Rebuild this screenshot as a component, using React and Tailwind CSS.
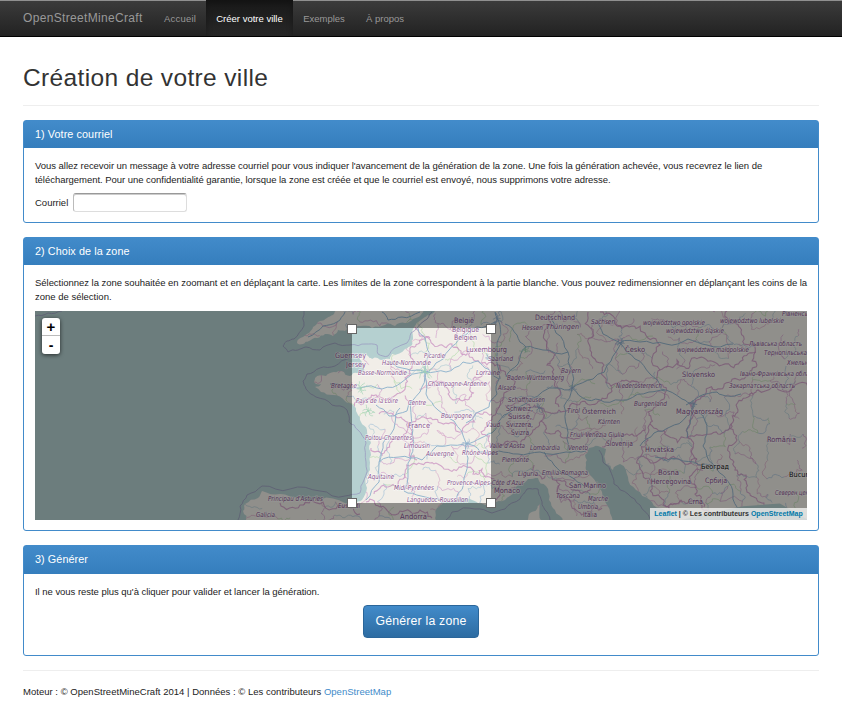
import React from "react";

// Deterministic generator so that the map is identical on every load.
function makeRandom(seed) {
  let s = seed;
  return () => {
    s = (s * 16807) % 2147483647;
    return s / 2147483647;
  };
}

// Midpoint displacement: turns a coarse polyline into a meandering one.
function meander(points, rand, amount = 0.28, depth = 2) {
  let pts = points;
  for (let d = 0; d < depth; d++) {
    const next = [pts[0]];
    for (let i = 1; i < pts.length; i++) {
      const [ax, ay] = pts[i - 1];
      const [bx, by] = pts[i];
      const k = (rand() - 0.5) * 2 * amount;
      next.push([(ax + bx) / 2 - (by - ay) * k, (ay + by) / 2 + (bx - ax) * k]);
      next.push([bx, by]);
    }
    pts = next;
  }
  return pts;
}

const toPath = (pts) => "M" + pts.map(([x, y]) => x.toFixed(1) + " " + y.toFixed(1)).join("L");

const parse = (text) => text.split(" ").map((p) => p.split(",").map(Number));

const ENGLAND = parse(
  "297,343 303,337 309,333 313,327 320,321 327,318 333,315 337,309 424,309 421,315 413,319 405,323 395,326 385,325 372,328 360,326 352,327 345,331 338,330 333,336 325,334 317,338 309,341 303,344"
);
const EUROPE = parse(
  "440,309 430,315 425,317 415,326 413,337 412,345 405,349 392,354 390,359 383,360 372,359 368,356 362,354 359,356 362,363 364,372 357,373 350,376 342,371 334,372 326,376 315,378 314,382 321,384 315,387 321,392 333,395 345,401 353,405 357,413 361,422 367,430 371,443 371,455 370,470 367,488 362,500 355,505 345,503 320,500 300,497 280,494 262,491 258,498 245,504 243,511 247,522 437,522 437,508 443,503 455,500 470,499 478,503 492,503 505,500 515,491 520,484 528,479 538,478 546,486 549,500 555,510 563,522 613,522 607,505 602,492 597,485 590,475 586,465 585,455 589,448 598,446 606,449 606,464 613,470 620,464 628,477 636,490 650,500 660,508 668,513 674,522 812,522 812,309"
);
const CORSICA = parse("527,522 529,514 537,509 540,504 542,522");

const LANDS = (() => {
  const rand = makeRandom(71);
  return [ENGLAND, EUROPE, CORSICA].map((p) => toPath(meander([...p, p[0]], rand, 0.18, 2)) + "Z");
})();

const MARITIME = [
  "35,316 48,313 62,311",
  "304,311 304,326 294,339 287,341 283,346 288,352 298,350 306,347 320,350 335,343 350,345 366,344 377,345 378,354 388,356 395,348 407,343 411,333 424,321 432,312",
  "350,358 335,366 320,368 307,374 303,381 306,389 316,397 332,405 347,410 349,422 358,430 366,443 366,462 364,480 360,493 345,496 320,491 290,489 262,486 247,495 240,506 238,520",
  "446,520 452,512 475,509 492,513 505,509 520,499 527,489 538,489 541,499 545,510 550,520",
  "599,450 603,462 610,470 614,484 628,494 640,505 650,519",
].map(parse);

const BORDERS = [
  "352,410 366,402 380,397 391,399 402,392 405,378 412,366 410,352 418,344 430,338",
  "415,327 424,337 440,345 452,344 461,353 470,352 482,363 500,366 512,377 506,392 500,405 492,420",
  "371,448 382,456 390,443 399,440 410,424 424,417 441,423 456,431 466,425 476,413 492,414",
  "366,502 380,507 400,511 420,510 432,518",
  "374,494 388,487 403,479 412,464 430,463 444,469 459,467 473,474 482,469 494,479 496,500",
  "379,414 391,413 404,420 411,434 407,447 417,460",
  "427,386 445,385 450,397 464,400 474,393 475,377 486,370",
  "492,420 481,432 491,445 504,444 519,446 531,434 541,421 538,407 526,403 505,406",
  "538,407 559,410 575,404 590,405 607,398 611,386 626,380 641,386 655,383 660,370 677,360 690,366 704,358 722,365 743,360 756,352",
  "546,315 553,325 545,340 555,355 547,365 553,378 560,390 559,407",
  "600,312 615,321 632,326 645,333 660,345 660,370",
  "588,312 593,333 590,350 604,365 611,386",
  "660,384 664,399 648,412 650,424 668,436 688,438 690,424 689,403 701,397 716,390 731,382 748,376 757,365",
  "688,438 700,435 718,434 731,424 738,410 748,397 758,390 785,392 808,387",
  "645,425 632,434 612,436 602,447",
  "650,424 648,440 641,456 658,461 679,459 697,459 693,448 688,438",
  "641,456 641,470 652,486 662,499 669,508 681,500 694,501 709,512 720,520",
  "697,459 702,470 691,482 695,494 704,507",
  "731,424 737,440 730,455 735,470 746,475 747,492 757,500 767,510 765,520",
  "757,365 752,344 741,332 730,323 727,311",
  "541,421 545,432 560,432 570,438 585,434 602,438",
  "534,465 542,479 558,480 571,489 584,492 595,487",
  "556,480 560,499 575,509 590,512 602,508",
  "280,503 300,505 323,502 344,506 360,514",
].map(parse);

const ROADS = [
  "425,372 436,363 449,350 461,336 477,327 495,322",
  "425,372 430,354 425,338 418,328",
  "425,372 407,369 389,361",
  "425,372 402,382 382,389 360,388 330,384",
  "425,372 420,392 407,411 389,416 376,405",
  "425,372 426,394 438,410 454,421 466,443 468,458 464,478 456,499",
  "425,372 446,372 463,362 478,361 488,369 499,379",
  "400,408 395,423 383,443 379,462 379,482 366,500",
  "411,400 412,425 413,447 408,463 404,491",
  "379,462 399,457 422,460 437,446 464,444",
  "404,491 421,496 440,500",
  "466,443 481,438 495,430 504,415 515,407 530,399 557,388 572,388",
  "466,443 480,452 499,451 518,454 540,452 566,452 586,451",
  "499,379 497,394 489,407 466,423",
  "572,388 593,379 611,361 620,345 622,338",
  "572,388 571,370 568,352 556,333 549,315",
  "568,352 543,350 526,347 517,335 505,324",
  "526,347 518,364 506,377",
  "572,388 587,400 604,402 627,400 649,392 665,391",
  "572,388 564,406 567,427 568,450",
  "619,342 603,334 598,320",
  "620,343 635,359 650,374 661,389 682,399 694,404",
  "686,405 700,396 717,392 728,396 741,394",
  "694,404 686,417 670,427 654,433 640,446",
  "694,406 690,424 687,438",
  "700,413 707,430 703,446 713,464 727,480 733,494 740,512",
  "655,457 678,459 699,465 712,465",
  "620,343 640,342 666,344 688,339 707,345 733,344",
  "544,452 554,465 571,477 584,486",
  "500,379 497,343 500,325 495,312",
  "382,312 388,320 402,317 420,312",
  "345,312 337,322 323,326 308,337",
].map(parse);

const HUBS = [
  [425, 372, 6],
  [572, 388, 4],
  [467, 444, 4],
  [620, 343, 4],
  [694, 404, 3],
  [489, 358, 4],
  [497, 319, 6],
  [539, 408, 4],
  [361, 388, 5],
  [368, 411, 5],
  [525, 350, 4],
];

const PALETTE = ["#d3a3cc", "#d3a3cc", "#d9abc8", "#a6c2d8", "#aecbd4", "#b7dcb0"];

const NETWORK = (() => {
  const rand = makeRandom(4242);
  const step = 15;
  const cols = 38;
  const rows = 15;
  const nodes = [];
  for (let r = 0; r < rows; r++) {
    nodes.push([]);
    for (let c = 0; c < cols; c++) {
      nodes[r].push([245 + c * step + (rand() - 0.5) * 11, 309 + r * step + (rand() - 0.5) * 11]);
    }
  }
  const out = [];
  const link = (a, b) => {
    const color = PALETTE[Math.floor(rand() * PALETTE.length)];
    out.push({ d: toPath(meander([a, b], rand, 0.3, 3)), color });
  };
  for (let r = 0; r < rows; r++) {
    for (let c = 0; c < cols; c++) {
      if (c + 1 < cols && rand() < 0.5) link(nodes[r][c], nodes[r][c + 1]);
      if (r + 1 < rows && rand() < 0.5) link(nodes[r][c], nodes[r + 1][c]);
    }
  }
  return out;
})();

const LINES = (() => {
  const rand = makeRandom(99);
  return {
    borders: BORDERS.map((p) => toPath(meander(p, rand, 0.32, 3))),
    roads: ROADS.map((p) => toPath(meander(p, rand, 0.13, 2))),
    maritime: MARITIME.map((p) => toPath(meander(p, rand, 0.12, 2))),
    hubs: HUBS.map(([x, y, r]) =>
      Array.from({ length: 9 }, (_, i) => {
        const a = (i / 9) * Math.PI * 2 + rand();
        const l = r * (0.6 + rand() * 0.9);
        return toPath(meander([[x, y], [x + Math.cos(a) * l, y + Math.sin(a) * l]], rand, 0.3, 2));
      }).join("")
    ),
  };
})();

// text, left, baseline, width, upright
const LABELS = [
  ["Guernsey", 335, 358, 31, 1],
  ["Jersey", 346, 367, 20, 1],
  ["Haute-Normandie", 382, 365, 49],
  ["Basse-Normandie", 358, 375, 49],
  ["Bretagne", 331, 388, 26],
  ["Pays de la Loire", 356, 403, 42],
  ["Centre", 408, 405, 18],
  ["France", 408, 428, 22, 1],
  ["Poitou-Charentes", 365, 440, 47],
  ["Limousin", 404, 448, 26],
  ["Aquitaine", 368, 479, 26],
  ["Midi-Pyrénées", 394, 490, 40],
  ["Languedoc-Roussillon", 407, 502, 61],
  ["Principau d'Asturies", 268, 501, 55],
  ["Euskadi", 338, 508, 22],
  ["Galicia", 256, 517, 19],
  ["Andorra", 400, 519, 27, 1],
  ["België", 454, 323, 20, 1],
  ["Belgique", 452, 332, 27, 1],
  ["Belgien", 454, 340, 23, 1],
  ["Deutschland", 535, 320, 40, 1],
  ["Hessen", 522, 330, 21],
  ["Thüringen", 546, 329, 33],
  ["Sachsen", 591, 324, 24],
  ["Luxembourg", 466, 352, 41, 1],
  ["Picardie", 424, 358, 21],
  ["Saarland", 488, 361, 25],
  ["Lorraine", 476, 375, 24],
  ["Bayern", 561, 373, 20],
  ["Baden-Württemberg", 507, 380, 57],
  ["Champagne-Ardenne", 428, 386, 59],
  ["Alsace", 498, 390, 18],
  ["Schaffhausen", 508, 402, 37],
  ["Schweiz,", 506, 411, 27, 1],
  ["Suisse,", 508, 419, 24, 1],
  ["Svizzera,", 506, 427, 27, 1],
  ["Svizra", 511, 435, 18, 1],
  ["Bourgogne", 441, 418, 31],
  ["Vaud", 486, 427, 14],
  ["Tirol", 567, 413, 13],
  ["Österreich", 582, 414, 34, 1],
  ["Kärnten", 598, 424, 22],
  ["Friuli Venezia Giulia", 570, 437, 54],
  ["Slovenija", 606, 446, 27, 1],
  ["Valle d'Aosta", 489, 448, 36],
  ["Lombardia", 530, 450, 30],
  ["Veneto", 568, 450, 20],
  ["Auvergne", 426, 456, 28],
  ["Rhône-Alpes", 462, 455, 36],
  ["Piemonte", 502, 462, 27],
  ["Liguria", 518, 476, 20],
  ["Emilia-Romagna", 542, 475, 46],
  ["Provence-Alpes-Côte d'Azur", 447, 485, 77],
  ["Monaco", 494, 493, 26, 1],
  ["San Marino", 569, 488, 37, 1],
  ["Toscana", 556, 498, 24],
  ["Marche", 588, 501, 20],
  ["Umbria", 578, 509, 20],
  ["Italia", 583, 517, 14, 1],
  ["województwo opolskie", 643, 325, 62],
  ["województwo lubelskie", 720, 323, 64],
  ["województwo śląskie", 666, 333, 58],
  ["województwo małopolskie", 677, 352, 72],
  ["Česko", 625, 352, 20, 1],
  ["Рівненська", 782, 316, 33],
  ["Львівська область", 749, 346, 53],
  ["Тернопільська", 764, 355, 43],
  ["Хмельницька", 787, 365, 38],
  ["Slovensko", 682, 377, 33, 1],
  ["Івано-Франківська область", 740, 376, 79],
  ["Закарпатська область", 729, 388, 66],
  ["Niederösterreich", 616, 388, 46],
  ["Burgenland", 634, 406, 33],
  ["Magyarország", 676, 414, 47, 1],
  ["România", 767, 442, 29, 1],
  ["Hrvatska", 645, 452, 29, 1],
  ["Bosna", 658, 475, 21, 1],
  ["i Hercegovina", 647, 484, 44, 1],
  ["Србија", 705, 483, 22, 1],
  ["Crna", 688, 504, 15, 1],
  ["Северен центр", 775, 495, 40],
];

const CORNERS = [
  [347, 324],
  [486, 324],
  [347, 498],
  [486, 498],
];

function EuropeMap() {
  return (
    <svg className="block h-[209px] w-[772px]" viewBox="35 311 772 209">
      <defs>
        <clipPath id="land">
          {LANDS.map((d, i) => (
            <path key={i} d={d} />
          ))}
        </clipPath>
      </defs>
      <rect x="35" y="311" width="772" height="209" fill="#b5d0d0" />
      {LANDS.map((d, i) => (
        <path key={i} d={d} fill="#f1eee8" />
      ))}
      <g clipPath="url(#land)" fill="none">
        {NETWORK.map((l, i) => (
          <path key={i} d={l.d} stroke={l.color} strokeWidth="0.9" opacity="0.75" />
        ))}
        {LINES.borders.map((d, i) => (
          <path key={i} d={d} stroke="#c88fc0" strokeWidth="1.1" opacity="0.75" />
        ))}
        {LINES.roads.map((d, i) => (
          <path key={i} d={d} stroke="#94b6ce" strokeWidth="1" />
        ))}
        {LINES.hubs.map((d, i) => (
          <path key={i} d={d} stroke={i === 0 || i > 7 ? "#9fd4b4" : "#94b0cc"} strokeWidth="0.6" />
        ))}
      </g>
      {LINES.maritime.map((d, i) => (
        <path key={i} d={d} fill="none" stroke="#9a9cc0" strokeWidth="0.8" />
      ))}
      <g
        fontFamily="'DejaVu Sans', sans-serif"
        fill="#8a5590"
        stroke="#ffffff"
        strokeOpacity="0.6"
        strokeWidth="1.6"
        strokeLinejoin="round"
        paintOrder="stroke"
      >
        {LABELS.map(([text, x, y, w, upright]) => (
          <text
            key={text}
            x={x}
            y={y}
            textLength={w}
            lengthAdjust="spacingAndGlyphs"
            fontSize={upright ? 7.4 : 6.9}
            fontStyle={upright ? "normal" : "italic"}
          >
            {text}
          </text>
        ))}
        <g fill="#111111" fontSize="7.2">
          <text x="701" y="469" textLength="28" lengthAdjust="spacingAndGlyphs">Београд</text>
          <text x="789" y="477" textLength="31" lengthAdjust="spacingAndGlyphs">București</text>
        </g>
      </g>
      <path d="M35 311H807V520H35ZM352 328V503H491V328Z" fillRule="evenodd" fill="#000000" opacity="0.4" />
      {CORNERS.map(([x, y]) => (
        <rect key={x + "-" + y} x={x + 0.5} y={y + 0.5} width="9" height="9" fill="#ffffff" stroke="#666666" />
      ))}
    </svg>
  );
}

function Panel({ title, className, headClassName = "h-[27px]", children }) {
  return (
    <section className={`rounded-[3px] border border-[#428bca] bg-white ${className}`}>
      <h3 className={`flex items-center bg-linear-to-b from-[#428bca] to-[#357ebd] pb-[2px] pl-[11px] text-[10.8px] tracking-[0.08px] text-white ${headClassName}`}>
        {title}
      </h3>
      {children}
    </section>
  );
}

function NavLink({ active, className, children }) {
  return (
    <a
      className={`flex h-[36px] items-center justify-center pt-px text-[9.5px] ${
        active ? "bg-linear-to-b from-[#191919] to-[#272727] text-white shadow-[inset_0_3px_6px_rgba(0,0,0,0.3)]" : "text-[#999999]"
      } ${className}`}
    >
      {children}
    </a>
  );
}

export default function App() {
  return (
    <div className="h-[703px] w-[842px] overflow-hidden bg-white font-['Liberation_Sans',Arial,sans-serif] text-[9.5px] leading-[14px] text-[#222222]">
      <nav className="flex h-[37px] whitespace-nowrap border-b border-black bg-linear-to-b from-[#3c3c3c] to-[#222222] pl-[23px] shadow-[inset_0_1px_0_#909090]">
        <a className="flex h-[36px] w-[131px] items-center text-[12px] tracking-[0.33px] text-[#999999]">OpenStreetMineCraft</a>
        <NavLink className="w-[52px] tracking-[0.2px]">Accueil</NavLink>
        <NavLink active className="w-[87px]">Créer votre ville</NavLink>
        <NavLink className="w-[62px]">Exemples</NavLink>
        <NavLink className="w-[60px]">À propos</NavLink>
      </nav>
      <main className="mx-[23px] w-[796px] whitespace-nowrap">
        <h1 className="h-[69px] border-b border-[#eeeeee] pt-[26px] text-[24.5px] leading-[30px] tracking-[0.36px] text-[#333333]">
          Création de votre ville
        </h1>
        <Panel title="1) Votre courriel" className="mt-[14px] h-[103px]">
          <div className="px-[11px] pt-[11px]">
            <p className="tracking-[-0.038px]">Vous allez recevoir un message à votre adresse courriel pour vous indiquer l'avancement de la génération de la zone. Une fois la génération achevée, vous recevrez le lien de</p>
            <p className="tracking-[-0.035px]">téléchargement. Pour une confidentialité garantie, lorsque la zone est créée et que le courriel est envoyé, nous supprimons votre adresse.</p>
            <label className="mt-[6px] flex items-center">
              <span className="w-[38px]">Courriel</span>
              <input className="h-[19px] w-[114px] rounded-[3px] border border-[#dddddd] border-t-[#999999] border-l-[#bbbbbb] bg-white shadow-[inset_0_1px_0_#cccccc]" />
            </label>
          </div>
        </Panel>
        <Panel title="2) Choix de la zone" className="mt-[14px] h-[294px]">
          <div className="px-[11px] pt-[11px]">
            <p className="tracking-[-0.035px]">Sélectionnez la zone souhaitée en zoomant et en déplaçant la carte. Les limites de la zone correspondent à la partie blanche. Vous pouvez redimensionner en déplançant les coins de la</p>
            <p>zone de sélection.</p>
            <div className="relative mt-[7px] h-[209px] w-[772px] overflow-hidden">
              <EuropeMap />
              <div className="absolute top-[7px] left-[7px] w-[18px] overflow-hidden rounded-[3px] bg-white text-center font-bold text-black shadow-[0_1px_4px_rgba(0,0,0,0.65)]">
                <div className="h-[18px] border-b border-[#bbbbbb] text-[15px] leading-[17px]">+</div>
                <div className="h-[18px] text-[14px] leading-[18px]">-</div>
              </div>
              <div className="absolute right-0 bottom-0 flex h-[12px] w-[157px] items-center justify-center bg-white/70 text-[7px] font-bold text-[#333333]">
                <span className="whitespace-pre"><a className="text-[#0078a8]">Leaflet</a> | © Les contributeurs <a className="text-[#0078a8]">OpenStreetMap</a></span>
              </div>
            </div>
          </div>
        </Panel>
        <Panel title="3) Générer" className="mt-[14px] h-[111px]" headClassName="h-[28px]">
          <div className="px-[11px] pt-[11px]">
            <p className="tracking-[-0.035px]">Il ne vous reste plus qu'à cliquer pour valider et lancer la génération.</p>
            <button className="mx-auto mt-[6px] flex h-[33px] w-[116px] items-center justify-center rounded-[4px] border border-[#2b669a] bg-linear-to-b from-[#428bca] to-[#2d6ca2] pb-[2px] text-[12.3px] tracking-[0.2px] text-white">
              Générer la zone
            </button>
          </div>
        </Panel>
        <footer className="mt-[14px] border-t border-[#eeeeee] pt-[14px] tracking-[0.02px]">
          Moteur : © OpenStreetMineCraft 2014 | Données : © Les contributeurs <a className="text-[#428bca]">OpenStreetMap</a>
        </footer>
      </main>
    </div>
  );
}
